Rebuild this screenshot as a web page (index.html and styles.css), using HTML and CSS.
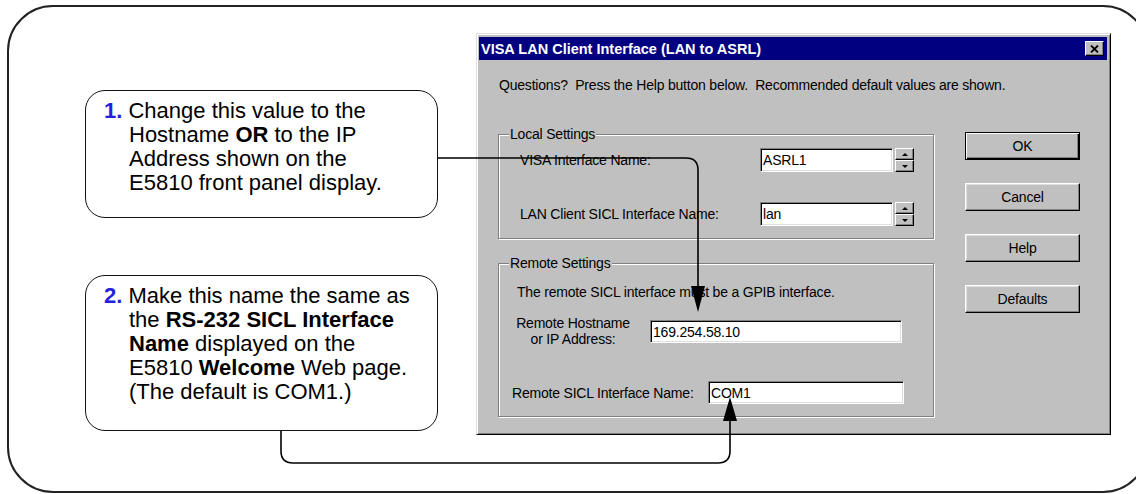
FILE: index.html
```html
<!DOCTYPE html>
<html lang="en">
<head>
  <meta charset="UTF-8">
  <title>VISA LAN Client Interface (LAN to ASRL)</title>
  <link rel="stylesheet" href="styles.css">
</head>
<body>
  <div class="sheet">
    <div class="notes">
      <div class="note note-one">
        <b class="step">1.</b> Change this value to the<br>
        Hostname <b>OR</b> to the IP<br>
        Address shown on the<br>
        E5810 front panel display.
      </div>
      <div class="note note-two">
        <b class="step">2.</b> Make this name the same as<br>
        the <b>RS-232 SICL Interface</b><br>
        <b>Name</b> displayed on the<br>
        E5810 <b>Welcome</b> Web page.<br>
        (The default is COM1.)
      </div>
    </div>

    <div class="dialog">
      <div class="titlebar">
        <span>VISA LAN Client Interface (LAN to ASRL)</span>
        <span class="close">
          <svg width="9" height="8" viewBox="0 0 9 8"><path d="M1 0.5 L8 7.5 M8 0.5 L1 7.5" stroke="#000" stroke-width="1.8"/></svg>
        </span>
      </div>
      <p class="intro">Questions?&nbsp; Press the Help button below.&nbsp; Recommended default values are shown.</p>

      <div class="dialog-body">
        <div class="groups">
          <div class="group group-local">
            <span class="legend">Local Settings</span>
            <div class="row">
              <span class="label label-local">VISA Interface Name:</span>
              <span class="field field-local">ASRL1</span>
              <span class="spinner"><span class="spin spin-up"></span><span class="spin spin-down"></span></span>
            </div>
            <div class="row row-lan">
              <span class="label label-local">LAN Client SICL Interface Name:</span>
              <span class="field field-local">lan</span>
              <span class="spinner"><span class="spin spin-up"></span><span class="spin spin-down"></span></span>
            </div>
          </div>

          <div class="group group-remote">
            <span class="legend">Remote Settings</span>
            <p class="remote-note">The remote SICL interface must be a GPIB interface.</p>
            <div class="row row-host">
              <span class="label label-host">Remote Hostname<br>or IP Address:</span>
              <span class="field field-host">169.254.58.10</span>
            </div>
            <div class="row row-sicl">
              <span class="label label-sicl">Remote SICL Interface Name:</span>
              <span class="field field-sicl">COM1</span>
            </div>
          </div>
        </div>

        <div class="buttons">
          <button class="btn btn-default">OK</button>
          <button class="btn">Cancel</button>
          <button class="btn">Help</button>
          <button class="btn">Defaults</button>
        </div>
      </div>
    </div>
  </div>

  <svg class="leaders" width="1136" height="494" viewBox="0 0 1136 494">
    <path d="M438 158 H686 Q698 158 698 170 V290" fill="none" stroke="#000" stroke-width="1.6"/>
    <polygon points="691,286 705,286 698,312" fill="#000"/>
    <path d="M281 431 V451 Q281 463 293 463 H718 Q730 463 730 451 V418" fill="none" stroke="#000" stroke-width="1.6"/>
    <polygon points="723,421 737,421 730,397" fill="#000"/>
  </svg>
</body>
</html>
```

FILE: styles.css
```css
body {
  margin: 0;
  width: 1136px;
  height: 494px;
  overflow: hidden;
  position: relative;
  background-color: #fff;
  font-family: "Liberation Sans", Arial, sans-serif;
  color: #000;
}
.sheet {
  box-sizing: border-box;
  display: flex;
  align-items: flex-start;
  width: 1142px;
  height: 488px;
  margin: 5px 0 0 7px;
  padding: 26px 0 0 76px;
  border: 2px solid #222;
  border-radius: 46px;
}

/* callouts */
.notes {
  width: 353px;
  margin-top: 57px;
}
.note {
  box-sizing: border-box;
  border: 1px solid #111;
  border-radius: 20px;
  padding: 8px 0 0 43px;
  text-indent: -25px;
  font-size: 22px;
  line-height: 24px;
}
.note-one {
  height: 128px;
}
.note-two {
  height: 156px;
  margin-top: 57px;
}
.step {
  color: #2222dd;
}

/* dialog */
.dialog {
  box-sizing: border-box;
  width: 635px;
  height: 402px;
  margin-left: 38px;
  padding: 3px 3px 3px 2px;
  background-color: #c0c0c0;
  border: 1px solid;
  border-color: #dfdfdf #000 #000 #dfdfdf;
  box-shadow: inset 1px 1px 0 #fff, inset -1px -1px 0 #808080;
  font-family: "Liberation Sans", Arial, sans-serif;
  font-size: 14px;
  letter-spacing: -0.2px;
}
.titlebar {
  display: flex;
  align-items: center;
  justify-content: space-between;
  height: 23px;
  padding: 0 3px 0 2px;
  background-color: #000080;
  color: #fff;
  font-size: 14.5px;
  font-weight: bold;
  letter-spacing: 0;
}
.close {
  box-sizing: border-box;
  display: flex;
  align-items: center;
  justify-content: center;
  width: 19px;
  height: 15px;
  background-color: #c0c0c0;
  border: 1px solid;
  border-color: #fff #000 #000 #fff;
  box-shadow: inset -1px -1px 0 #808080;
}
.intro {
  margin: 17px 0 0 20px;
  line-height: 16px;
}
.dialog-body {
  display: flex;
  align-items: flex-start;
  margin-top: 39px;
  padding-left: 19px;
}
.groups {
  width: 436px;
  margin-top: 2px;
}
.group {
  box-sizing: border-box;
  position: relative;
  border: 1px solid #808080;
  box-shadow: 1px 1px 0 #fff, inset 1px 1px 0 #fff;
}
.legend {
  position: absolute;
  top: -9px;
  left: 10px;
  padding: 0 1px;
  line-height: 16px;
  background-color: #c0c0c0;
}
.group-local {
  height: 105px;
  padding-top: 13px;
}
.group-remote {
  height: 154px;
  margin-top: 24px;
}
.row {
  display: flex;
  align-items: center;
}
.row-lan {
  margin-top: 30px;
}
.label {
  box-sizing: border-box;
  line-height: 16px;
}
.label-local {
  width: 261px;
  padding-left: 21px;
}
.field {
  box-sizing: border-box;
  height: 24px;
  padding-left: 2px;
  line-height: 22px;
  background-color: #fff;
  border: 1px solid;
  border-color: #808080 #fff #fff #808080;
  box-shadow: inset 1px 1px 0 #000, inset -1px -1px 0 #dfdfdf;
}
.field-local {
  width: 133px;
}
.spinner {
  display: flex;
  flex-direction: column;
  width: 19px;
  height: 24px;
  margin-left: 2px;
}
.spin {
  box-sizing: border-box;
  flex: 1;
  display: flex;
  align-items: center;
  justify-content: center;
  background-color: #c0c0c0;
  border: 1px solid;
  border-color: #fff #000 #000 #fff;
  box-shadow: inset -1px -1px 0 #808080;
}
.spin-up::after {
  content: "";
  border: 3px solid transparent;
  border-bottom: 3px solid #000;
  border-top-width: 0;
}
.spin-down::after {
  content: "";
  border: 3px solid transparent;
  border-top: 3px solid #000;
  border-bottom-width: 0;
}
.remote-note {
  margin: 20px 0 0 18px;
  line-height: 16px;
}
.row-host {
  margin-top: 15px;
}
.label-host {
  width: 151px;
  padding-right: 3px;
  text-align: center;
}
.field-host {
  width: 252px;
  height: 23px;
}
.row-sicl {
  margin-top: 34px;
}
.label-sicl {
  width: 209px;
  padding-left: 13px;
}
.field-sicl {
  width: 196px;
  height: 23px;
}

/* buttons */
.buttons {
  display: flex;
  flex-direction: column;
  gap: 23px;
  margin-left: 31px;
}
.btn {
  box-sizing: border-box;
  width: 115px;
  height: 28px;
  padding: 0;
  font-family: inherit;
  font-size: 14px;
  letter-spacing: -0.2px;
  color: #000;
  background-color: #c0c0c0;
  border: 1px solid;
  border-color: #fff #000 #000 #fff;
  box-shadow: inset -1px -1px 0 #808080, inset 1px 1px 0 #dfdfdf;
}
.btn-default {
  border-color: #000;
  box-shadow: inset 1px 1px 0 #fff, inset -1px -1px 0 #000, inset -2px -2px 0 #808080;
}

.leaders {
  position: absolute;
  top: 0;
  left: 0;
  pointer-events: none;
}
```
